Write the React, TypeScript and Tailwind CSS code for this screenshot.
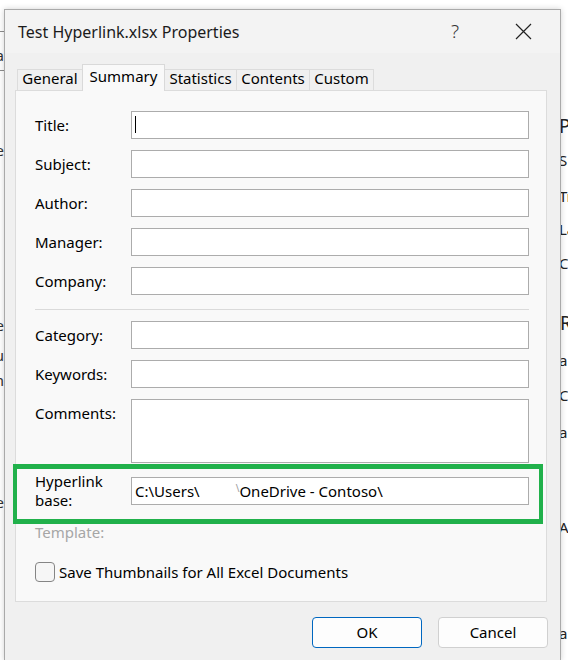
import React from 'react';

const Field: React.FC<{ label: string; tall?: boolean; caret?: boolean }> = ({ label, tall, caret }) => (
  <div className="flex items-start">
    <div className="w-[96px] h-[28px] flex items-center">{label}</div>
    <div
      className={`w-[398px] ${tall ? 'h-[64px]' : 'h-[28px]'} bg-white border border-[#acacac] flex items-start pl-[3px]`}
    >
      {caret && <div className="mt-[4px] w-px h-[17px] bg-black" />}
    </div>
  </div>
);

const Tab: React.FC<{ label: string; w: string; active?: boolean }> = ({ label, w, active }) =>
  active ? (
    <div
      className={`${w} h-[27px] -mb-px -ml-px relative z-10 bg-[#f9f9f9] border border-b-0 border-[#d9d9d9] flex items-start justify-center leading-[22px]`}
    >
      {label}
    </div>
  ) : (
    <div
      className={`${w} h-[21px] -ml-px bg-[#f0f0f0] border border-b-0 border-[#dcdcdc] flex items-start justify-center leading-[17px]`}
    >
      {label}
    </div>
  );

const App: React.FC = () => {
  return (
    <div className="w-[568px] h-[660px] bg-white flex overflow-hidden text-[15px] text-black font-['Noto_Sans',sans-serif]">
      {/* page behind, left edge */}
      <div className="w-[4px] shrink-0 flex flex-col items-end overflow-hidden text-[#333] leading-[20px] whitespace-nowrap">
        <div className="mt-[31px] h-px w-full bg-[#8c8c8c]" />
        <div className="mt-[13px] h-[20px]">Ca</div>
        <div className="mt-[5px] h-px w-full bg-[#8c8c8c]" />
        <div className="mt-[69px] h-[20px]">e</div>
        <div className="mt-[155px] h-[20px]">e</div>
        <div className="mt-[10px] h-[20px]">u</div>
        <div className="mt-[5px] h-[20px]">h</div>
        <div className="mt-[102px] h-[20px]">e</div>
      </div>

      {/* dialog window */}
      <div className="relative mt-[9px] w-[557px] h-[652px] shrink-0 border border-[#a9a9a9] bg-[#f0f0f0] flex flex-col shadow-[0_0_6px_rgba(0,0,0,0.18)]">
        <div className="h-[43px] bg-[#f3f3f3] flex items-center pl-[13px]">
          <span className="text-[16px] text-[#1b1b1b]">Test Hyperlink.xlsx Properties</span>
          <div className="ml-auto w-[46px] h-[43px] flex items-center justify-center text-[19px] font-light text-[#333]">
            ?
          </div>
          <div className="ml-[22px] mr-[14px] w-[46px] h-[43px] flex items-center justify-center">
            <svg width="17" height="17" viewBox="0 0 17 17" fill="none" stroke="#222" strokeWidth="1.2">
              <path d="M1 1L16 16M16 1L1 16" />
            </svg>
          </div>
        </div>

        <div className="flex-1 flex flex-col pl-[10px] pt-[10px]">
          <div className="flex items-end h-[27px] pl-[3px]">
            <Tab label="General" w="w-[66px]" />
            <Tab label="Summary" w="w-[83px]" active />
            <Tab label="Statistics" w="w-[73px]" />
            <Tab label="Contents" w="w-[74px]" />
            <Tab label="Custom" w="w-[65px]" />
          </div>

          <div className="w-[532px] h-[512px] bg-[#f9f9f9] border border-[#dcdcdc] pl-[19px] pt-[20px] flex flex-col">
            <div className="flex flex-col gap-[11px]">
              <Field label="Title:" caret />
              <Field label="Subject:" />
              <Field label="Author:" />
              <Field label="Manager:" />
              <Field label="Company:" />
            </div>
            <div className="mt-[14px] w-[494px] h-px bg-[#dadada]" />
            <div className="mt-[11px] flex flex-col gap-[11px]">
              <Field label="Category:" />
              <Field label="Keywords:" />
              <Field label="Comments:" tall />
            </div>
            <div className="mt-[14px] h-[28px] flex items-center">
              <div className="w-[96px] h-[28px] flex flex-col justify-center leading-[19px]">
                <span>Hyperlink</span>
                <span>base:</span>
              </div>
              <div className="w-[398px] h-[28px] bg-white border border-[#acacac] pl-[3px] flex items-center whitespace-nowrap">
                <span>C:\Users\</span>
                <span className="inline-block w-[36px]" />
                <span className="text-[#9a9a9a] text-[10px] self-start mt-[3px]">\</span>
                <span>OneDrive - Contoso\</span>
              </div>
            </div>
            <div className="mt-[17px] h-[20px] leading-[20px] text-[#a6a6a6]">Template:</div>
            <div className="mt-[19px] flex items-center gap-[4px]">
              <div className="w-[20px] h-[20px] rounded-[4px] border border-[#858585] bg-[#f6f6f6]" />
              <span>Save Thumbnails for All Excel Documents</span>
            </div>
          </div>

          <div className="mt-[15px] flex justify-end gap-[16px] pr-[12px]">
            <button className="w-[110px] h-[31px] rounded-[4px] border border-[#0067c0] bg-[#fdfdfd] text-[15px]">
              OK
            </button>
            <button className="w-[110px] h-[31px] rounded-[4px] border border-[#d0d0d0] bg-[#fdfdfd] text-[15px]">
              Cancel
            </button>
          </div>
        </div>

        {/* highlight annotation */}
        <div className="absolute left-[8px] top-[454px] w-[530px] h-[60px] border-x-4 border-y-[5px] border-[#21b14b]" />
      </div>

      {/* page behind, right edge */}
      <div className="w-[7px] shrink-0 flex flex-col overflow-hidden text-[#222] leading-[20px] whitespace-nowrap">
        <div className="mt-[116px] h-[20px] text-[19px] -ml-[2px]">Pr</div>
        <div className="mt-[14px] h-[20px] -ml-[2px]">Si</div>
        <div className="mt-[16px] h-[20px] -ml-[2px]">Tr</div>
        <div className="mt-[13px] h-[20px] -ml-[2px]">La</div>
        <div className="mt-[14px] h-[20px] -ml-[2px]">Ca</div>
        <div className="mt-[40px] h-[20px] text-[19px] -ml-[1px]">Re</div>
        <div className="mt-[17px] h-[20px] -ml-[2px]">a</div>
        <div className="mt-[15px] h-[20px] -ml-[2px]">Cr</div>
        <div className="mt-[17px] h-[20px] -ml-[2px]">a</div>
        <div className="mt-[75px] h-[20px] -ml-[2px]">Au</div>
        <div className="mt-[86px] h-[20px] -ml-[2px]">a</div>
      </div>
    </div>
  );
};

export default App;
